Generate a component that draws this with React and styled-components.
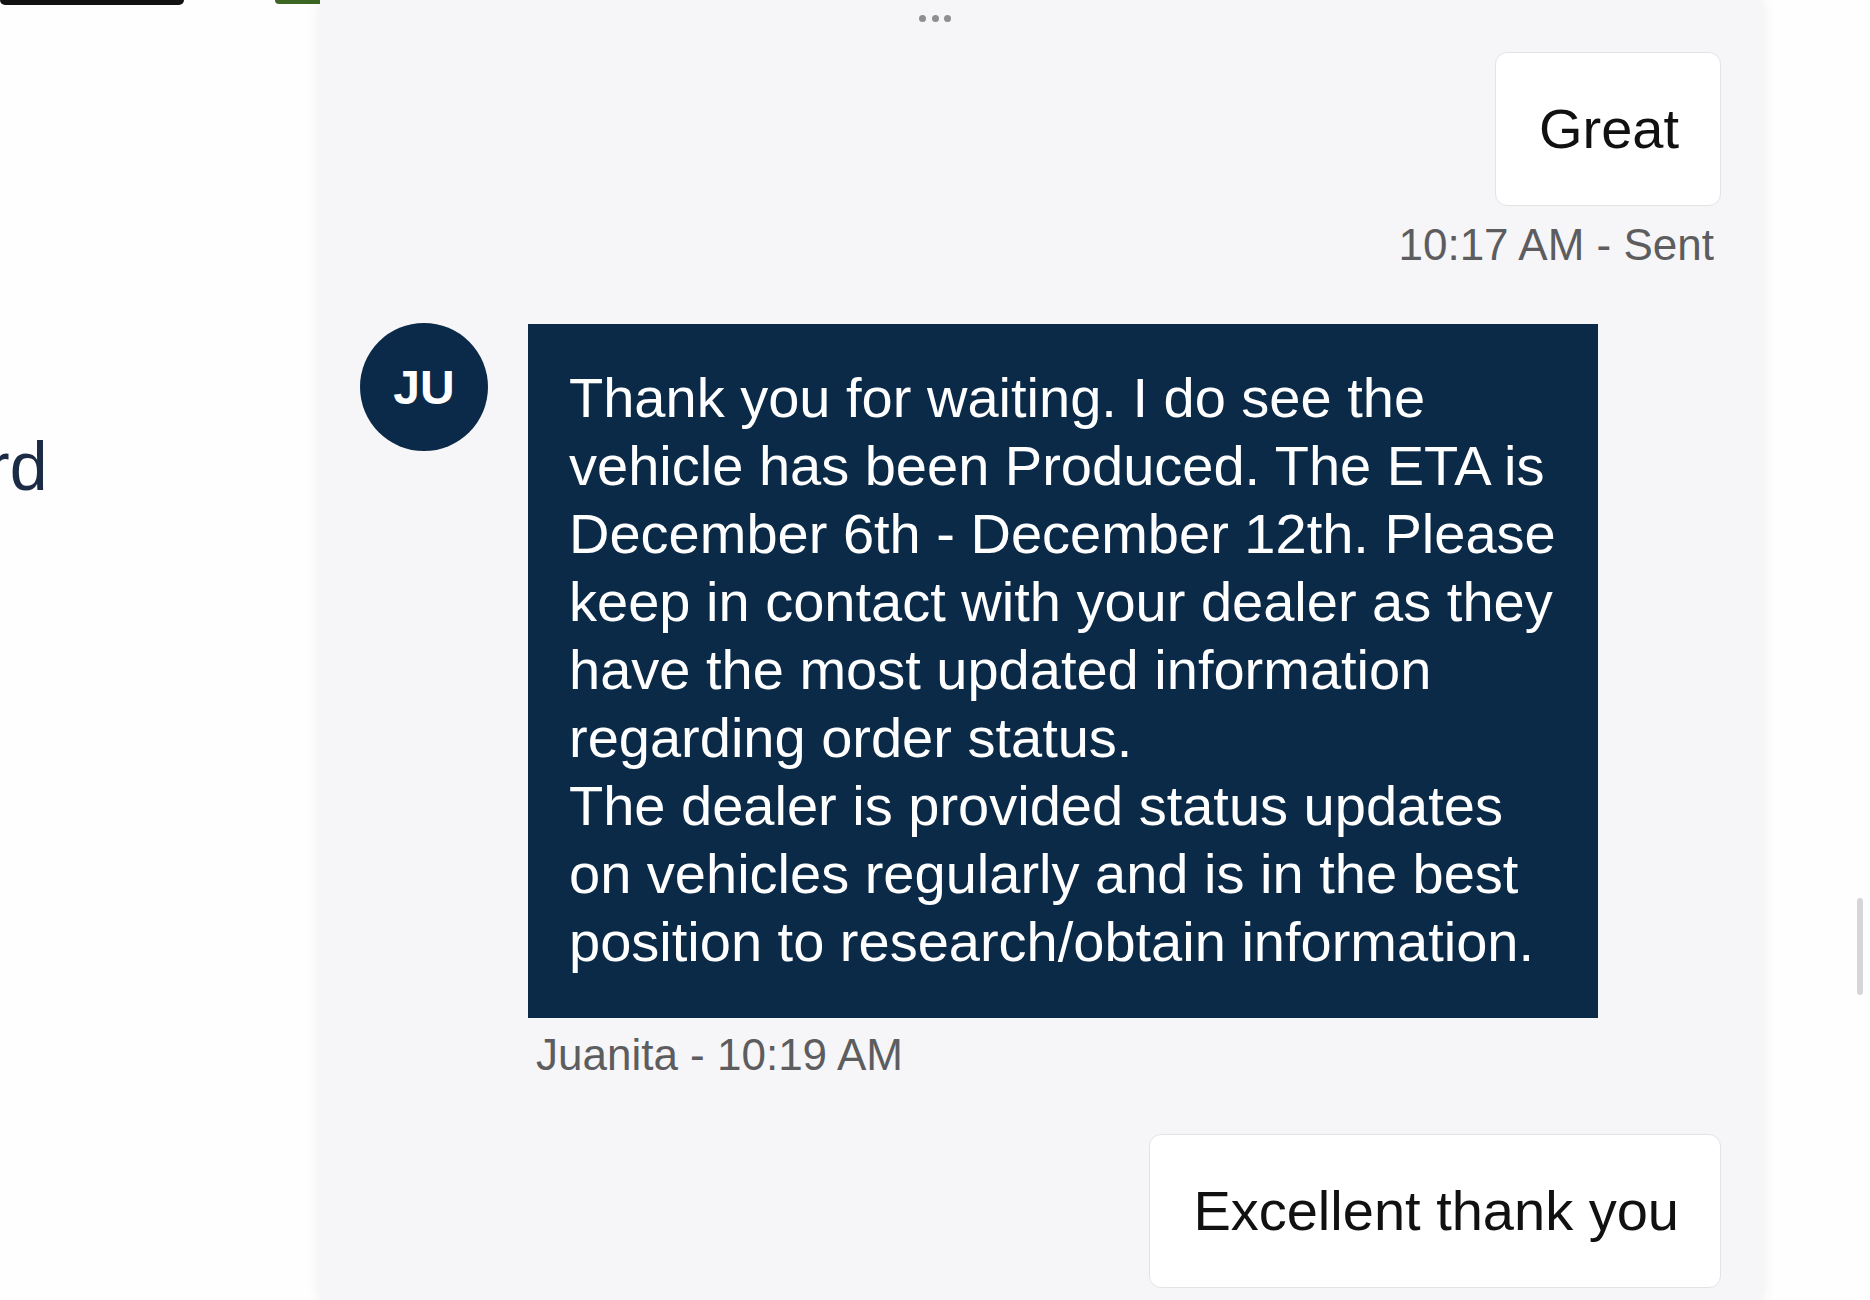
import React from 'react'
import styled, { createGlobalStyle } from 'styled-components'

const GlobalStyle = createGlobalStyle`
  * { box-sizing: border-box; }
  body {
    margin: 0;
    background: #fefefe;
    font-family: "Liberation Sans", Arial, Helvetica, sans-serif;
  }
`

const dealerReply = `Thank you for waiting. I do see the vehicle has been Produced. The ETA is December 6th - December 12th. Please keep in contact with your dealer as they have the most updated information regarding order status.
The dealer is provided status updates on vehicles regularly and is in the best position to research/obtain information.`

const App = () => {
    return (
        <Page>
            <GlobalStyle />
            <Side>
                <SideTop>
                    <DarkButton />
                    <GreenThumb />
                </SideTop>
                <SideTitle>rd</SideTitle>
            </Side>

            <ChatPanel>
                <TypingDots>
                    <Dot />
                    <Dot />
                    <Dot />
                </TypingDots>

                <Outgoing>
                    <UserBubble>Great</UserBubble>
                    <Meta align="right">10:17 AM - Sent</Meta>
                </Outgoing>

                <Incoming>
                    <Avatar>JU</Avatar>
                    <IncomingBody>
                        <AgentBubble>{dealerReply}</AgentBubble>
                        <Meta align="left">Juanita - 10:19 AM</Meta>
                    </IncomingBody>
                </Incoming>

                <Outgoing gap={54}>
                    <UserBubble>Excellent thank you</UserBubble>
                </Outgoing>
            </ChatPanel>

            <Gutter>
                <ScrollThumb />
            </Gutter>
        </Page>
    )
}

export default App

const Page = styled.div`
  display: flex;
  width: 1870px;
  height: 1300px;
  overflow: hidden;
`

const Side = styled.div`
  width: 320px;
  flex-shrink: 0;
  display: flex;
  flex-direction: column;
  overflow: hidden;
`

const SideTop = styled.div`
  display: flex;
  align-items: flex-start;
  height: 4px;
`

const DarkButton = styled.div`
  width: 184px;
  flex-shrink: 0;
  height: 5px;
  background: #121212;
  border-radius: 0 0 18px 18px;
`

const GreenThumb = styled.div`
  margin-left: 91px;
  width: 45px;
  flex-shrink: 0;
  height: 4px;
  background: #3d6623;
  border-radius: 0 0 0 24px;
`

const SideTitle = styled.div`
  margin: 423px 0 0 -13px;
  font-size: 68px;
  color: #1b2a45;
  white-space: nowrap;
`

const ChatPanel = styled.div`
  width: 1443px;
  flex-shrink: 0;
  height: 1300px;
  background: #f6f6f8;
  padding: 0 42px 0 40px;
  display: flex;
  flex-direction: column;
  box-shadow: 0 0 14px rgba(0, 0, 0, 0.07);
  position: relative;
  z-index: 1;
`

const TypingDots = styled.div`
  height: 36px;
  display: flex;
  align-items: center;
  gap: 5.5px;
  padding-left: 559px;
`

const Dot = styled.span`
  width: 7px;
  height: 7px;
  border-radius: 50%;
  background: #8f8f93;
`

const Outgoing = styled.div`
  display: flex;
  flex-direction: column;
  align-items: flex-end;
  margin-top: ${p => p.gap ?? 16}px;
`

const UserBubble = styled.div`
  background: #ffffff;
  border: 1px solid #e3e3e6;
  border-radius: 12px;
  padding: 42px 41px 42px 43px;
  font-size: 56px;
  line-height: 68px;
  color: #111111;
  white-space: nowrap;
`

const Meta = styled.div`
  margin-top: ${p => (p.align === 'right' ? 14 : 12)}px;
  padding: ${p => (p.align === 'right' ? '0 7px 0 0' : '0 0 0 8px')};
  font-size: 44px;
  color: #5d5d60;
  text-align: ${p => p.align};
`

const Incoming = styled.div`
  display: flex;
  align-items: flex-start;
  gap: 40px;
  margin-top: 54px;
`

const Avatar = styled.div`
  width: 128px;
  height: 128px;
  flex-shrink: 0;
  margin-top: -1px;
  border-radius: 50%;
  background: #0b2a49;
  color: #ffffff;
  font-weight: 700;
  font-size: 48px;
  display: flex;
  align-items: center;
  justify-content: center;
`

const IncomingBody = styled.div`
  display: flex;
  flex-direction: column;
`

const AgentBubble = styled.div`
  width: 1070px;
  background: #0b2a48;
  padding: 40px 36px 42px 41px;
  font-size: 56px;
  line-height: 68px;
  color: #ffffff;
  white-space: pre-line;
`

const Gutter = styled.div`
  flex: 1;
  display: flex;
  justify-content: flex-end;
  padding: 898px 7px 0 0;
`

const ScrollThumb = styled.div`
  width: 6px;
  height: 97px;
  border-radius: 3px;
  background: #d6d6d8;
`
